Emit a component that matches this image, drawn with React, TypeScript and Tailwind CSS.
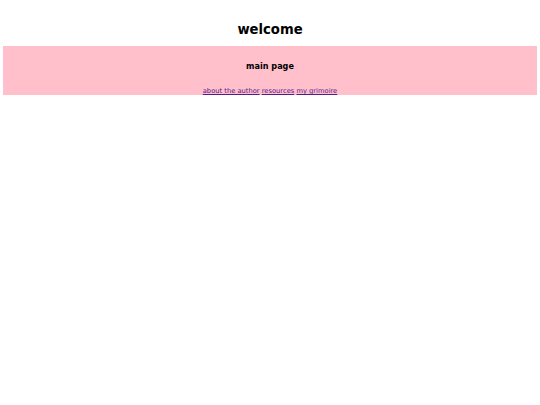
const links = ['about the author', 'resources', 'my grimoire']

export default function App() {
  return (
    <div className="min-h-screen bg-white px-[3.2px] text-black" style={{ fontFamily: '"DejaVu Sans", sans-serif' }}>
      <h1 className="pt-[22.3px] pb-[8.8px] text-center text-[13.2px] font-bold leading-[1.164]">welcome</h1>
      <div className="flex h-[49px] flex-col items-center bg-[#ffc0cb] pt-[15.6px]">
        <h3 className="text-[8.1px] font-bold leading-[1.164]">main page</h3>
        <p className="mt-[16.6px] text-[6.72px] leading-[1.164]">
          {links.map((label, i) => (
            <span key={label}>
              {i > 0 && ' '}
              <a href="#" className="text-[#551a8b] underline">{label}</a>
            </span>
          ))}
        </p>
      </div>
    </div>
  )
}
